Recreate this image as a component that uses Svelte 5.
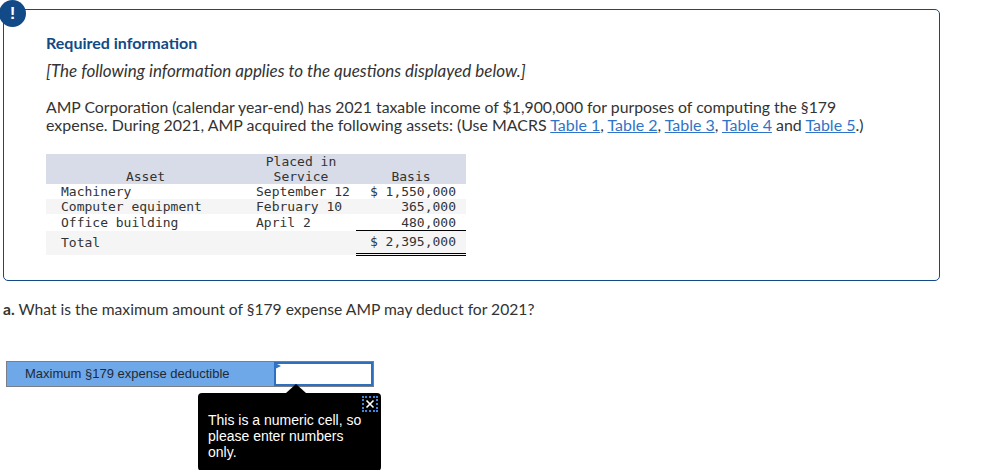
<script lang="ts">
	const assets = [
		{ name: 'Machinery', date: 'September 12', basis: '$ 1,550,000' },
		{ name: 'Computer equipment', date: 'February 10', basis: '365,000' },
		{ name: 'Office building', date: 'April 2', basis: '480,000' }
	];
	const links = ['Table 1', 'Table 2', 'Table 3', 'Table 4'];
</script>

<div class="page">
	<section class="info">
		<span class="badge">!</span>
		<h2>Required information</h2>
		<p class="note">[The following information applies to the questions displayed below.]</p>
		<p class="body">
			<span class="first">AMP Corporation (calendar year-end) has 2021 taxable income of $1,900,000 for purposes of computing the §179</span><br />
			expense. During 2021, AMP acquired the following assets: (Use MACRS {#each links as l, i}<a href="#t">{l}</a>{i < 3 ? ', ' : ' '}{/each}and <a href="#t">Table 5</a>.)
		</p>

		<table>
			<thead>
				<tr>
					<th class="asset">Asset</th>
					<th class="date">Placed in<br />Service</th>
					<th class="basis">Basis</th>
				</tr>
			</thead>
			<tbody>
				{#each assets as a, i}
					<tr class:alt={i % 2 === 1} class:last={i === 2}>
						<td class="name">{a.name}</td>
						<td class="when">{a.date}</td>
						<td class="amount" class:under={i === 2}>{a.basis}</td>
					</tr>
				{/each}
				<tr class="alt total">
					<td class="name">Total</td>
					<td></td>
					<td class="amount">$ 2,395,000</td>
				</tr>
			</tbody>
		</table>
	</section>

	<p class="question"><b>a.</b> What is the maximum amount of §179 expense AMP may deduct for 2021?</p>

	<div class="answer">
		<div class="label">Maximum §179 expense deductible</div>
		<div class="cell">
			<span class="flag"></span>
			<div class="tip">
				<button class="close" aria-label="Close">
					<svg viewBox="0 0 10 10" width="10" height="10" aria-hidden="true">
						<path d="M1.5 1.5 L8.5 8.5 M8.5 1.5 L1.5 8.5" stroke="#fff" stroke-width="1.6" fill="none" />
					</svg>
				</button>
				<p>This is a numeric cell, so please enter numbers only.</p>
			</div>
		</div>
	</div>
</div>

<style>
	:global(body) {
		background: #fff;
	}
	.page {
		width: 981px;
		height: 470px;
		box-sizing: border-box;
		padding: 9px 41px 0 3px;
		overflow: hidden;
		font-family: Lato, 'Open Sans', sans-serif;
		color: #333;
	}
	.info {
		position: relative;
		height: 272px;
		box-sizing: border-box;
		border: 1px solid #114a86;
		border-radius: 5px;
		padding: 23px 42px 0;
	}
	.badge {
		position: absolute;
		left: -5px;
		top: -10px;
		width: 27px;
		height: 27px;
		border-radius: 50%;
		background: #114a86;
		color: #fff;
		font: 700 17px/27px 'Liberation Sans', sans-serif;
		text-align: center;
	}
	h2 {
		margin: 0;
		font-size: 16px;
		line-height: 20px;
		font-weight: 700;
		color: #114a86;
	}
	.note {
		margin: 8px 0 0;
		font-size: 17px;
		line-height: 20px;
		font-style: italic;
	}
	.body {
		margin: 17px 0 0;
		font-size: 15.96px;
		line-height: 18px;
		white-space: nowrap;
	}
	.first {
		font-size: 15.8px;
	}
	a {
		color: #2f74c8;
	}
	table {
		margin-top: 20px;
		width: 420px;
		border-collapse: collapse;
		table-layout: fixed;
		font: 13px/15px 'DejaVu Sans Mono', monospace;
		color: #333;
	}
	thead tr {
		background: #d8dce8;
	}
	th {
		padding: 0;
		font-weight: 400;
		text-align: center;
		vertical-align: bottom;
	}
	.asset {
		width: 210px;
		padding-right: 11px;
		box-sizing: border-box;
	}
	.date {
		width: 100px;
		padding-right: 10px;
		box-sizing: border-box;
	}
	td {
		padding: 0;
		height: 15px;
	}
	.alt {
		background: #f5f5f5;
	}
	.name {
		padding-left: 15px;
	}
	.when {
		white-space: nowrap;
	}
	.amount {
		text-align: right;
		padding-right: 10px;
		white-space: nowrap;
	}
	.last td {
		padding-top: 1px;
	}
	.under {
		border-bottom: 1px solid #000;
	}
	.total td {
		height: 21px;
		vertical-align: middle;
	}
	.total .amount {
		border-bottom: 3px double #000;
		padding-bottom: 1px;
	}
	.question {
		margin: 18px 0 0;
		font-size: 15.65px;
		line-height: 20px;
	}
	.answer {
		display: flex;
		margin: 42px 0 0 3px;
		width: 368px;
		height: 26px;
		box-sizing: border-box;
		border: 1px solid #7a7f87;
		font: 13px/24px 'Liberation Sans', sans-serif;
		color: #1f2a36;
	}
	.label {
		width: 267px;
		box-sizing: border-box;
		padding-left: 18px;
		background: #6fa8e8;
	}
	.cell {
		position: relative;
		flex: 1;
		background: #fff;
		border: 2px solid #2f6fc0;
		box-sizing: border-box;
		height: 24px;
	}
	.flag {
		position: absolute;
		left: -1px;
		top: -1px;
		border-left: 6px solid #2f74c8;
		border-top: 3px solid transparent;
		border-bottom: 3px solid transparent;
	}
	.tip {
		position: absolute;
		left: -78px;
		top: 29px;
		width: 183px;
		height: 78px;
		box-sizing: border-box;
		padding: 19px 10px 0;
		background: #000;
		border-radius: 4px;
		color: #fff;
		font: 14px/16px 'Liberation Sans', sans-serif;
	}
	.tip::before {
		content: '';
		position: absolute;
		left: 88px;
		top: -9px;
		border-left: 10px solid transparent;
		border-right: 10px solid transparent;
		border-bottom: 9px solid #000;
	}
	.tip p {
		margin: 0;
	}
	.close {
		position: absolute;
		right: 3px;
		top: 3px;
		width: 16px;
		height: 16px;
		box-sizing: border-box;
		padding: 0;
		display: flex;
		align-items: center;
		justify-content: center;
		background: none;
		border: 2px dotted #3f86dc;
	}
</style>
